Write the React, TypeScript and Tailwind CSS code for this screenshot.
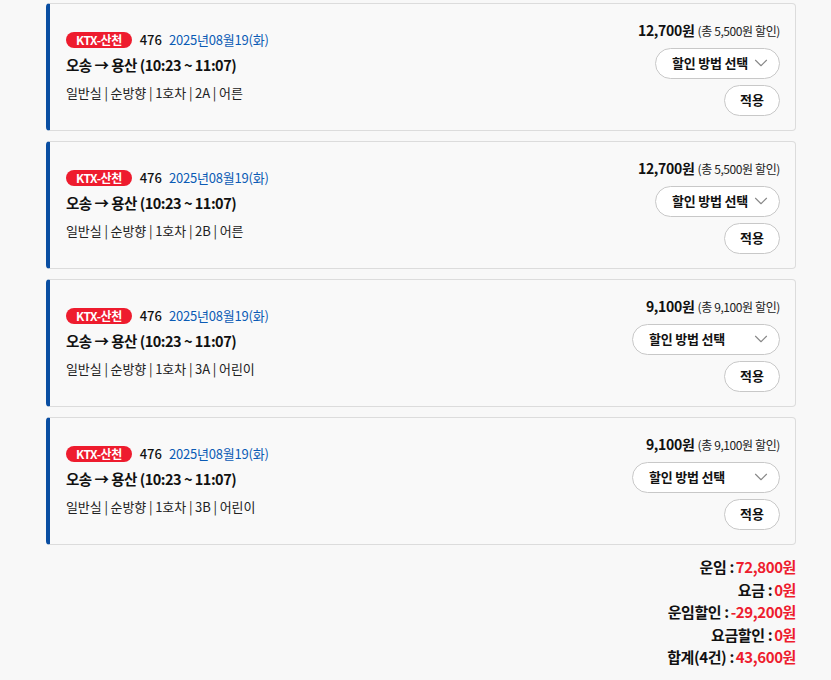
import { ChevronDown } from 'lucide-react';

type Ticket = {
  seat: string;
  passenger: string;
  price: string;
  discount: string;
  selectWidth: string;
};

const tickets: Ticket[] = [
  { seat: '2A', passenger: '어른', price: '12,700원', discount: '(총 5,500원 할인)', selectWidth: 'w-[125px]' },
  { seat: '2B', passenger: '어른', price: '12,700원', discount: '(총 5,500원 할인)', selectWidth: 'w-[125px]' },
  { seat: '3A', passenger: '어린이', price: '9,100원', discount: '(총 9,100원 할인)', selectWidth: 'w-[148px]' },
  { seat: '3B', passenger: '어린이', price: '9,100원', discount: '(총 9,100원 할인)', selectWidth: 'w-[148px]' },
];

const summary = [
  { label: '운임', value: '72,800원' },
  { label: '요금', value: '0원' },
  { label: '운임할인', value: '-29,200원' },
  { label: '요금할인', value: '0원' },
  { label: '합계(4건)', value: '43,600원' },
];

function TicketCard({ ticket }: { ticket: Ticket }) {
  return (
    <div className="flex items-center justify-between h-[128px] bg-[#f9f9f9] border border-[#dcdcdc] border-l-4 border-l-[#0a4ea2] rounded-[4px] pl-4 pr-[15px]">
      <div className="flex flex-col">
        <div className="flex items-center h-[18px]">
          <span className="inline-flex items-center h-[16px] px-[10px] rounded-full bg-[#ee1c2e] text-white text-[12px] font-bold leading-none tracking-[-0.5px]">
            KTX-산천
          </span>
          <span className="ml-[8px] text-[13px] font-medium text-[#111]">476</span>
          <span className="ml-[7px] text-[13px] text-[#0b5bb5] tracking-[-0.2px]">2025년08월19(화)</span>
        </div>
        <div className="mt-[5px] leading-[22px] text-[14.5px] font-bold text-[#111] tracking-[-0.5px]">
          오송 → 용산 (10:23 ~ 11:07)
        </div>
        <div className="mt-[7px] leading-[20px] text-[13px] text-[#222] tracking-[-0.1px]">
          일반실 | 순방향 | 1호차 | {ticket.seat} | {ticket.passenger}
        </div>
      </div>
      <div className="flex flex-col items-end pt-[1px]">
        <div className="flex items-baseline h-[20px] leading-[20px]">
          <span className="text-[14px] font-bold text-[#111] tracking-[-0.3px]">{ticket.price}</span>
          <span className="ml-[3px] text-[12px] text-[#222] tracking-[-0.4px]">{ticket.discount}</span>
        </div>
        <button
          className={`mt-[8px] h-[31px] ${ticket.selectWidth} flex items-center justify-between whitespace-nowrap pl-[16px] pr-[7px] rounded-full border border-[#c8c8c8] bg-white text-[13px] font-bold text-[#111] tracking-[-0.2px]`}
        >
          <span>할인 방법 선택</span>
          <ChevronDown className="w-[22px] h-[22px] shrink-0 text-[#888]" strokeWidth={1.2} />
        </button>
        <button className="mt-[6px] h-[31px] w-[56px] rounded-full border border-[#c8c8c8] bg-white text-[13px] font-bold text-[#111]">
          적용
        </button>
      </div>
    </div>
  );
}

export default function App() {
  return (
    <div
      className="min-h-[680px] bg-[#f8f8f8] pt-[3px] pl-[46px]"
      style={{ fontFamily: '"Noto Sans CJK KR", "Noto Sans", sans-serif' }}
    >
      <div className="w-[750px]">
        <div className="flex flex-col gap-[10px]">
          {tickets.map((t, i) => (
            <TicketCard key={i} ticket={t} />
          ))}
        </div>
        <div className="mt-[11px] flex flex-col items-end">
          {summary.map((s) => (
            <div key={s.label} className="leading-[22.5px] text-[15px] font-bold tracking-[-0.4px]">
              <span className="text-[#111]">{s.label} :</span>
              <span className="ml-[2px] text-[#ee1c2e]">{s.value}</span>
            </div>
          ))}
        </div>
      </div>
    </div>
  );
}
